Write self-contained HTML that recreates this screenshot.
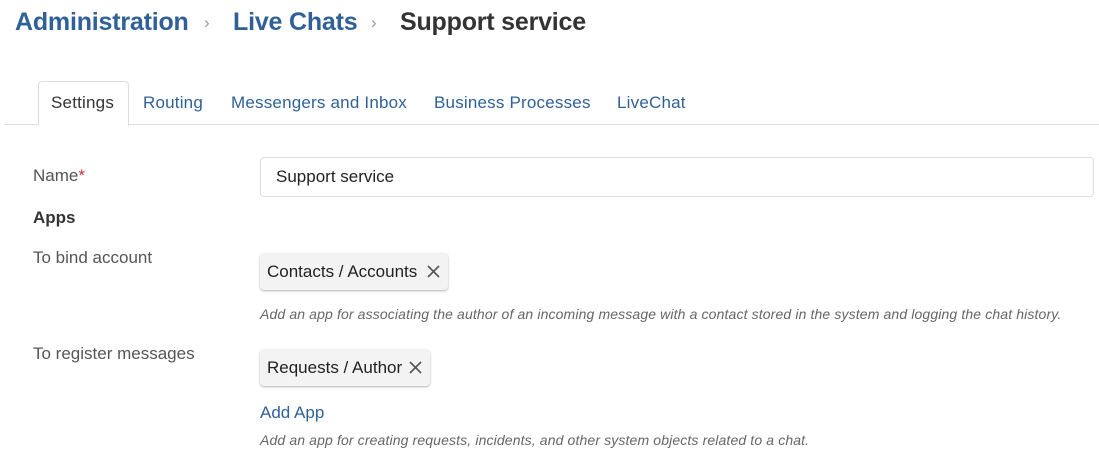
<!DOCTYPE html><html><head><style>
body{margin:0;width:1099px;height:461px;background:#fff;font-family:"Liberation Sans",sans-serif;position:relative;overflow:hidden;color:#333}
.a{position:absolute;white-space:nowrap}
.bc{font-size:25px;top:8px;font-weight:bold;letter-spacing:-0.2px}
.blue{color:#2f6198}
.tab{font-size:17px;top:93px;color:#2f6198;letter-spacing:0.2px}
.lbl{font-size:17px;color:#555;left:33px}
.chip{background:#f3f3f3;border-radius:4px;box-shadow:0 1px 2px rgba(0,0,0,.3);font-size:17px;color:#222;height:37px;line-height:37px;padding-left:7px}
.help{font-size:14px;font-style:italic;color:#666;left:260px;letter-spacing:0.13px}
.x{position:absolute;right:8px;top:12px;width:13px;height:13px}
</style></head><body>
<div class="a bc blue" style="left:15px">Administration</div>
<div class="a" style="left:204px;top:13px;font-size:17px;color:#999">›</div>
<div class="a bc blue" style="left:233px">Live Chats</div>
<div class="a" style="left:371px;top:13px;font-size:17px;color:#999">›</div>
<div class="a bc" style="left:400px;color:#333">Support service</div>
<div class="a" style="left:4px;top:124px;width:1095px;height:1px;background:#ddd"></div>
<div class="a" style="left:38px;top:81px;width:89px;height:44px;border:1px solid #ddd;border-bottom:none;border-radius:4px 4px 0 0;background:#fff"></div>
<div class="a tab" style="left:51px;color:#333">Settings</div>
<div class="a tab" style="left:143px">Routing</div>
<div class="a tab" style="left:231px">Messengers and Inbox</div>
<div class="a tab" style="left:434px">Business Processes</div>
<div class="a tab" style="left:617px">LiveChat</div>
<div class="a lbl" style="top:166px">Name<span style="color:#c33">*</span></div>
<div class="a" style="left:260px;top:157px;width:832px;height:38px;border:1px solid #ddd;border-radius:4px"></div>
<div class="a" style="left:276px;top:167px;font-size:17px;color:#222">Support service</div>
<div class="a" style="left:33px;top:208px;font-size:17px;font-weight:bold;color:#333">Apps</div>
<div class="a lbl" style="top:248px">To bind account</div>
<div class="a chip" style="left:260px;top:253px;width:181px">Contacts / Accounts<svg class="x" viewBox="0 0 13 13"><path d="M1 1L12 12M12 1L1 12" stroke="#555" stroke-width="1.6"/></svg></div>
<div class="a help" style="top:306px">Add an app for associating the author of an incoming message with a contact stored in the system and logging the chat history.</div>
<div class="a lbl" style="top:344px">To register messages</div>
<div class="a chip" style="left:260px;top:349px;width:163px">Requests / Author<svg class="x" viewBox="0 0 13 13"><path d="M1 1L12 12M12 1L1 12" stroke="#555" stroke-width="1.6"/></svg></div>
<div class="a" style="left:260px;top:403px;font-size:17px;color:#2f6198">Add App</div>
<div class="a help" style="top:432px">Add an app for creating requests, incidents, and other system objects related to a chat.</div>
</body></html>
